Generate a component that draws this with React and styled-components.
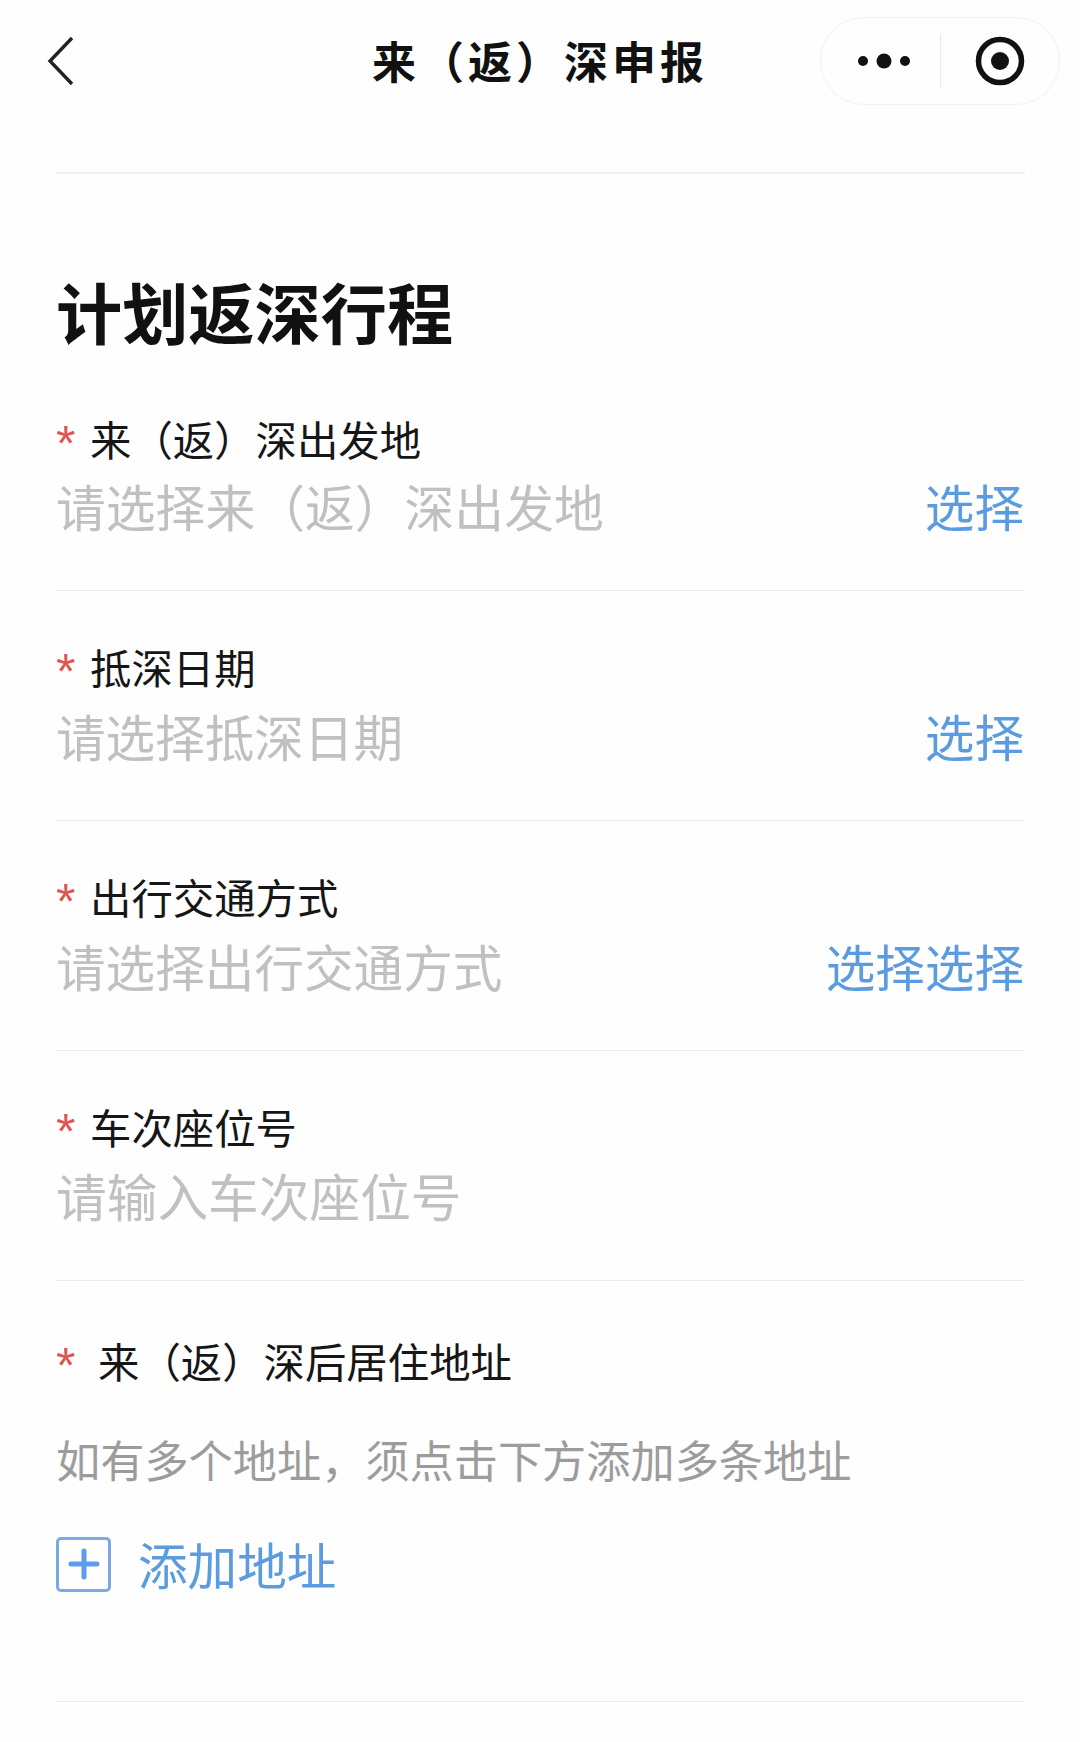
import React from 'react';
import styled, { createGlobalStyle } from 'styled-components';

const GlobalStyle = createGlobalStyle`
    html, body {
        margin: 0;
        padding: 0;
        background: #fff;
        font-family: "Noto Sans CJK SC", "Noto Sans", sans-serif;
    }
`;

const Page = styled.div`
    width: 1080px;
    height: 1742px;
    overflow: hidden;
    box-sizing: border-box;
    background: #fefefe;
`;

const NavBar = styled.header`
    height: 122px;
    display: grid;
    grid-template-columns: 240px 1fr 240px;
    align-items: center;
    padding: 0 20px;
`;

const BackButton = styled.svg`
    width: 28px;
    height: 50px;
    margin-left: 27px;
    display: block;
`;

const NavTitle = styled.h1`
    margin: -2px 0 0;
    font-size: 44px;
    line-height: 60px;
    font-weight: 700;
    letter-spacing: 4px;
    color: #111;
    text-align: center;
    white-space: nowrap;
`;

const Capsule = styled.div`
    width: 240px;
    height: 88px;
    box-sizing: border-box;
    border: 1px solid #f1f1f1;
    border-radius: 44px;
    display: grid;
    grid-template-columns: 119px 1px 1fr;
    align-items: center;
`;

const CapsuleCell = styled.div`
    box-sizing: border-box;
    display: flex;
    justify-content: center;
    align-items: center;
    padding-left: ${props => props.$inset || 0}px;
`;

const CapsuleDivider = styled.div`
    height: 54px;
    background: #e8e8e8;
`;

const Content = styled.main`
    padding: 0 55px 0 56px;
`;

const TitleBlock = styled.div`
    border-top: 2px solid #f1f1f1;
    margin-top: 50px;
    height: 218px;
    box-sizing: border-box;
    padding-top: 88px;
`;

const PageTitle = styled.h2`
    margin: 0;
    font-size: 66.2px;
    line-height: 96px;
    font-weight: 700;
    color: #111;
`;

const Field = styled.section`
    height: ${props => props.$height || 230}px;
    box-sizing: border-box;
    border-bottom: 1px solid #ececec;
    padding-top: ${props => props.$top ?? 45}px;
`;

const LabelRow = styled.div`
    display: flex;
    align-items: center;
    height: 60px;
    gap: ${props => props.$gap || 12}px;
`;

const Star = styled.span`
    width: 22px;
    font-size: 50px;
    line-height: 60px;
    color: #e2544e;
    position: relative;
    top: 6px;
    font-family: "Liberation Sans", sans-serif;
`;

const Label = styled.span`
    font-size: 41.4px;
    line-height: 60px;
    color: #161616;
    white-space: nowrap;
`;

const ValueRow = styled.div`
    display: flex;
    justify-content: space-between;
    align-items: center;
    height: 70px;
    margin-top: ${props => props.$gap ?? 4}px;
`;

const Placeholder = styled.span`
    font-size: ${props => props.$size || 49.6}px;
    line-height: 70px;
    color: #c0c0c0;
    white-space: nowrap;
`;

const Action = styled.span`
    font-size: 49.6px;
    line-height: 70px;
    color: #5b9be0;
    white-space: nowrap;
    margin-right: 1px;
`;

const Hint = styled.div`
    font-size: 44.2px;
    line-height: 64px;
    margin-top: 37px;
    color: #9c9c9c;
    white-space: nowrap;
`;

const AddRow = styled.div`
    display: flex;
    align-items: center;
    gap: 27px;
    margin-top: 37px;
`;

const AddBox = styled.div`
    width: 55px;
    height: 55px;
    box-sizing: border-box;
    border: 3px solid #7aa9e6;
    border-radius: 5px;
    display: flex;
    align-items: center;
    justify-content: center;
    color: #5f9cec;
    position: relative;
    top: 1px;
`;

const AddText = styled.span`
    font-size: 49.6px;
    line-height: 70px;
    color: #5b9be0;
`;

const fields = [
    { label: '来（返）深出发地', placeholder: '请选择来（返）深出发地', action: '选择', top: 18, height: 201, size: 49.8, gap: 2 },
    { label: '抵深日期', placeholder: '请选择抵深日期', action: '选择' },
    { label: '出行交通方式', placeholder: '请选择出行交通方式', action: '选择选择' },
    { label: '车次座位号', placeholder: '请输入车次座位号', size: 50.7 },
];

function App() {

    const fieldList = fields.map(item => {
        return (
            <Field key={item.label} $top={item.top} $height={item.height}>
                <LabelRow>
                    <Star>*</Star>
                    <Label>{item.label}</Label>
                </LabelRow>
                <ValueRow $gap={item.gap}>
                    <Placeholder $size={item.size}>{item.placeholder}</Placeholder>
                    {item.action && <Action>{item.action}</Action>}
                </ValueRow>
            </Field>
        );
    });

    return (
        <Page>
            <GlobalStyle />
            <NavBar>
                <BackButton viewBox="0 0 28 50">
                    <path d="M25 2 L3 25 L25 48" fill="none" stroke="#222" strokeWidth="3.4" />
                </BackButton>
                <NavTitle>来（返）深申报</NavTitle>
                <Capsule>
                    <CapsuleCell $inset={6}>
                        <svg width="54" height="20" viewBox="0 0 54 20">
                            <circle cx="6" cy="10" r="5" fill="#111" />
                            <circle cx="27" cy="10" r="7.5" fill="#111" />
                            <circle cx="48" cy="10" r="5" fill="#111" />
                        </svg>
                    </CapsuleCell>
                    <CapsuleDivider />
                    <CapsuleCell>
                        <svg width="50" height="50" viewBox="0 0 50 50">
                            <circle cx="25" cy="25" r="21.5" fill="none" stroke="#111" strokeWidth="5.5" />
                            <circle cx="25" cy="25" r="9" fill="#111" />
                        </svg>
                    </CapsuleCell>
                </Capsule>
            </NavBar>
            <Content>
                <TitleBlock>
                    <PageTitle>计划返深行程</PageTitle>
                </TitleBlock>
                {fieldList}
                <Field $height={421} $top={49}>
                    <LabelRow $gap={20}>
                        <Star>*</Star>
                        <Label>来（返）深后居住地址</Label>
                    </LabelRow>
                    <Hint>如有多个地址，须点击下方添加多条地址</Hint>
                    <AddRow>
                        <AddBox>
                            <svg width="32" height="32" viewBox="0 0 32 32">
                                <path d="M16 3 V29 M3 16 H29" stroke="currentColor" strokeWidth="5" strokeLinecap="round" />
                            </svg>
                        </AddBox>
                        <AddText>添加地址</AddText>
                    </AddRow>
                </Field>
            </Content>
        </Page>
    );
}

export default App;
